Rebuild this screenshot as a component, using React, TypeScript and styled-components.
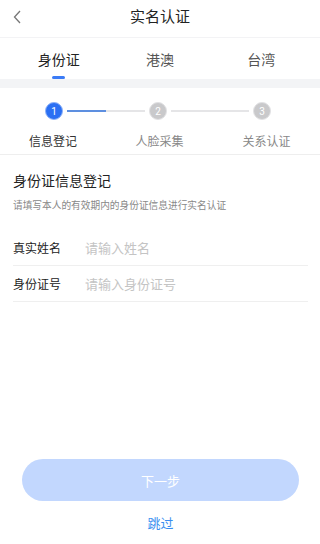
import React from "react";
import styled, { createGlobalStyle } from "styled-components";

const Global = createGlobalStyle`
  html, body { margin: 0; padding: 0; background: #ffffff; }
  body { font-family: "Noto Sans CJK SC", "Noto Sans", sans-serif; }
  * { box-sizing: border-box; }
`;

const Page = styled.div`
  width: 320px;
  height: 544px;
  display: flex;
  flex-direction: column;
  background: #fff;
  overflow: hidden;
`;

const Header = styled.div`
  height: 38px;
  display: grid;
  grid-template-columns: 40px 1fr 40px;
  align-items: center;
  border-bottom: 1px solid #f3f3f5;
`;

const BackBtn = styled.div`
  display: flex;
  align-items: center;
  padding-left: 12px;
  height: 100%;
  margin-top: -4px;
`;

const Title = styled.div`
  text-align: center;
  font-size: 15px;
  color: #222;
  line-height: 20px;
  margin-top: -6px;
`;

const Tabs = styled.div`
  height: 41px;
  padding: 0 8px;
  display: grid;
  grid-template-columns: repeat(3, 1fr);
`;

const Tab = styled.div<{ $active?: boolean }>`
  display: flex;
  flex-direction: column;
  align-items: center;
  justify-content: flex-start;
  padding-top: 11px;
  font-size: 14px;
  line-height: 20px;
  color: ${(p) => (p.$active ? "#222" : "#555")};
  &::after {
    content: "";
    margin-top: 7px;
    width: 13px;
    height: 3px;
    border-radius: 2px;
    background: ${(p) => (p.$active ? "#3b7bf6" : "transparent")};
  }
`;

const Band = styled.div`
  height: 9px;
  background: #f3f4f6;
`;

const Steps = styled.div`
  display: flex;
  flex-direction: column;
  border-bottom: 1px solid #eeeeee;
  height: 67px;
`;

const StepTrack = styled.div`
  display: flex;
  align-items: center;
  padding-left: 45px;
  margin-top: 13px;
  height: 20px;
`;

const Dot = styled.div<{ $active?: boolean }>`
  width: 18px;
  height: 18px;
  border-radius: 50%;
  flex: none;
  display: flex;
  align-items: center;
  justify-content: center;
  font-family: "Roboto", "Liberation Sans", sans-serif;
  font-size: 10px;
  color: #fff;
  background: ${(p) => (p.$active ? "#2a6ff3" : "#c9c9cb")};
  border: 1px solid ${(p) => (p.$active ? "#8fb3f8" : "#e2e2e4")};
`;

const Line = styled.div<{ $w: number; $fill: number }>`
  width: ${(p) => p.$w}px;
  height: 2px;
  margin: 0 4px;
  flex: none;
  background: linear-gradient(
    to right,
    #5d8fe0 0,
    #5d8fe0 ${(p) => p.$fill}px,
    #e5e5e7 ${(p) => p.$fill}px
  );
`;

const StepLabels = styled.div`
  display: grid;
  grid-template-columns: 106px 107px 107px;
  margin-top: 11px;
`;

const StepLabel = styled.div<{ $active?: boolean }>`
  text-align: center;
  font-size: 12px;
  line-height: 18px;
  color: ${(p) => (p.$active ? "#333" : "#888")};
`;

const Section = styled.div`
  padding: 0 12px 0 13px;
  display: flex;
  flex-direction: column;
`;

const SectionTitle = styled.div`
  font-size: 14px;
  line-height: 20px;
  color: #222;
  margin-top: 15px;
`;

const SectionDesc = styled.div`
  font-size: 9.7px;
  line-height: 14px;
  color: #888;
  margin-top: 8px;
  margin-bottom: 18px;
`;

const Row = styled.div`
  height: 36px;
  display: flex;
  align-items: center;
  border-bottom: 1px solid #efefef;
`;

const RowLabel = styled.div`
  width: 72px;
  font-size: 12px;
  color: #222;
`;

const Input = styled.input`
  border: none;
  outline: none;
  flex: 1;
  padding: 0;
  font-family: "Noto Sans CJK SC", "Noto Sans", sans-serif;
  font-size: 13px;
  color: #222;
  background: transparent;
  &::placeholder { color: #c4c4c4; }
`;

const Spacer = styled.div`
  flex: 1;
`;

const Footer = styled.div`
  display: flex;
  flex-direction: column;
  align-items: center;
  padding: 0 21px 12px 22px;
`;

const NextButton = styled.button`
  width: 100%;
  height: 42px;
  border: none;
  border-radius: 21px;
  background: #c2d7fe;
  color: #ffffff;
  font-family: "Noto Sans CJK SC", "Noto Sans", sans-serif;
  font-size: 13px;
`;

const Skip = styled.div`
  margin-top: 13px;
  font-size: 13px;
  line-height: 18px;
  color: #3a8ef0;
`;

export default function App() {
  return (
    <Page>
      <Global />
      <Header>
        <BackBtn>
          <svg width="10" height="14" viewBox="0 0 10 14">
            <path d="M8 1 L2.5 7 L8 13" fill="none" stroke="#777" strokeWidth="1.3" />
          </svg>
        </BackBtn>
        <Title>实名认证</Title>
        <div />
      </Header>
      <Tabs>
        <Tab $active>身份证</Tab>
        <Tab>港澳</Tab>
        <Tab>台湾</Tab>
      </Tabs>
      <Band />
      <Steps>
        <StepTrack>
          <Dot $active>1</Dot>
          <Line $w={78} $fill={39} />
          <Dot>2</Dot>
          <Line $w={78} $fill={0} />
          <Dot>3</Dot>
        </StepTrack>
        <StepLabels>
          <StepLabel $active>信息登记</StepLabel>
          <StepLabel>人脸采集</StepLabel>
          <StepLabel>关系认证</StepLabel>
        </StepLabels>
      </Steps>
      <Section>
        <SectionTitle>身份证信息登记</SectionTitle>
        <SectionDesc>请填写本人的有效期内的身份证信息进行实名认证</SectionDesc>
        <Row>
          <RowLabel>真实姓名</RowLabel>
          <Input placeholder="请输入姓名" />
        </Row>
        <Row>
          <RowLabel>身份证号</RowLabel>
          <Input placeholder="请输入身份证号" />
        </Row>
      </Section>
      <Spacer />
      <Footer>
        <NextButton>下一步</NextButton>
        <Skip>跳过</Skip>
      </Footer>
    </Page>
  );
}
